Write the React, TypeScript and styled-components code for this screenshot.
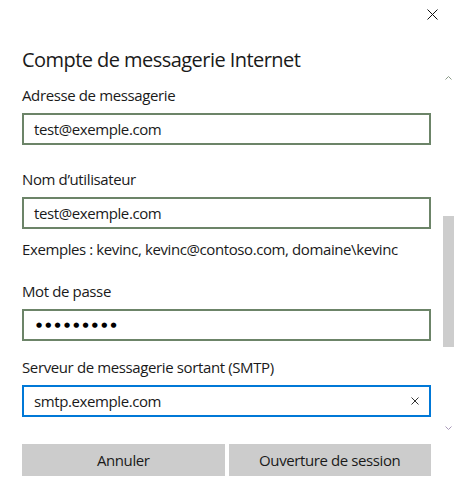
import React from "react";
import styled, { createGlobalStyle } from "styled-components";

const Global = createGlobalStyle`
  html, body { margin: 0; padding: 0; background: #ffffff; }
  body { font-family: "Open Sans", "Noto Sans", sans-serif; color: #1a1a1a; }
  * { box-sizing: border-box; }
`;

const Page = styled.div`
  position: relative;
  width: 454px;
  height: 484px;
  overflow: hidden;
  background: #fff;
`;

const TopBar = styled.div`
  display: flex;
  justify-content: flex-end;
  height: 45px;
  padding: 8px 16px 0 0;
`;

const CloseButton = styled.button`
  width: 12px;
  height: 12px;
  padding: 0;
  border: none;
  background: none;
  display: flex;
  align-items: center;
  justify-content: center;
`;

const Content = styled.div`
  padding: 0 23px 0 22px;
  display: flex;
  flex-direction: column;
`;

const Title = styled.h1`
  margin: 0;
  font-size: 20px;
  font-weight: 400;
  line-height: 30px;
  color: #1a1a1a;
  letter-spacing: -0.55px;
`;

const Field = styled.div<{ $top: number }>`
  display: flex;
  flex-direction: column;
  margin-top: ${(p) => p.$top}px;
`;

const Label = styled.label`
  font-size: 15px;
  line-height: 20px;
  color: #1a1a1a;
  letter-spacing: -0.38px;
`;

const InputBox = styled.div<{ $focused?: boolean }>`
  margin-top: 8px;
  height: 32px;
  border: 2px solid ${(p) => (p.$focused ? "#0078d7" : "#6c8468")};
  display: flex;
  align-items: center;
  padding: 0 10px 0 10px;
  font-size: 15px;
  color: #1a1a1a;
  letter-spacing: -0.4px;
`;

const InputText = styled.span`
  flex: 1;
`;

const Dots = styled.span`
  flex: 1;
  font-family: "DejaVu Sans", sans-serif;
  font-size: 7px;
  letter-spacing: 3.2px;
  padding-left: 2px;
  color: #000;
`;

const Hint = styled.div`
  margin-top: 10px;
  font-size: 15px;
  line-height: 20px;
  letter-spacing: -0.4px;
  color: #1a1a1a;
`;

const Buttons = styled.div`
  margin-top: 27px;
  display: grid;
  grid-template-columns: 1fr 1fr;
  gap: 4px;
`;

const Button = styled.button`
  height: 32px;
  border: none;
  background: #cccccc;
  font-family: inherit;
  font-size: 15px;
  letter-spacing: -0.4px;
  color: #1a1a1a;
  padding: 0;
`;

const ScrollBar = styled.div`
  position: absolute;
  right: 0;
  top: 72px;
  width: 11px;
  height: 362px;
  display: flex;
  flex-direction: column;
  align-items: center;
`;

const Arrow = styled.div`
  height: 12px;
  display: flex;
  align-items: center;
  justify-content: center;
`;

const Track = styled.div`
  flex: 1;
  width: 100%;
  position: relative;
`;

const Thumb = styled.div`
  position: absolute;
  left: 0;
  right: 0;
  background: #cdcdcd;
`;

const XIcon = ({ size, color, stroke }: { size: number; color: string; stroke: number }) => (
  <svg width={size} height={size} viewBox={`0 0 ${size} ${size}`}>
    <path d={`M0.5 0.5 L${size - 0.5} ${size - 0.5} M${size - 0.5} 0.5 L0.5 ${size - 0.5}`} stroke={color} strokeWidth={stroke} fill="none" />
  </svg>
);

export default function App() {
  return (
    <>
      <Global />
      <Page>
        <TopBar>
          <CloseButton aria-label="Fermer">
            <XIcon size={11} color="#111" stroke={1} />
          </CloseButton>
        </TopBar>
        <Content>
          <Title>Compte de messagerie Internet</Title>
          <Field $top={10}>
            <Label>Adresse de messagerie</Label>
            <InputBox>
              <InputText>test@exemple.com</InputText>
            </InputBox>
          </Field>
          <Field $top={24}>
            <Label>Nom d’utilisateur</Label>
            <InputBox>
              <InputText>test@exemple.com</InputText>
            </InputBox>
          </Field>
          <Hint>Exemples : kevinc, kevinc@contoso.com, domaine\kevinc</Hint>
          <Field $top={22}>
            <Label>Mot de passe</Label>
            <InputBox>
              <Dots>●●●●●●●●●</Dots>
            </InputBox>
          </Field>
          <Field $top={16}>
            <Label>Serveur de messagerie sortant (SMTP)</Label>
            <InputBox $focused>
              <InputText>smtp.exemple.com</InputText>
              <XIcon size={8} color="#333" stroke={1} />
            </InputBox>
          </Field>
          <Buttons>
            <Button>Annuler</Button>
            <Button>Ouverture de session</Button>
          </Buttons>
        </Content>
        <ScrollBar>
          <Arrow>
            <svg width="7" height="4" viewBox="0 0 7 4">
              <path d="M0.5 3.5 L3.5 0.5 L6.5 3.5" stroke="#8a9a88" strokeWidth="1" fill="none" />
            </svg>
          </Arrow>
          <Track>
            <Thumb style={{ top: 132, height: 131 }} />
          </Track>
          <Arrow>
            <svg width="7" height="4" viewBox="0 0 7 4">
              <path d="M0.5 0.5 L3.5 3.5 L6.5 0.5" stroke="#a898b8" strokeWidth="1" fill="none" />
            </svg>
          </Arrow>
        </ScrollBar>
      </Page>
    </>
  );
}
